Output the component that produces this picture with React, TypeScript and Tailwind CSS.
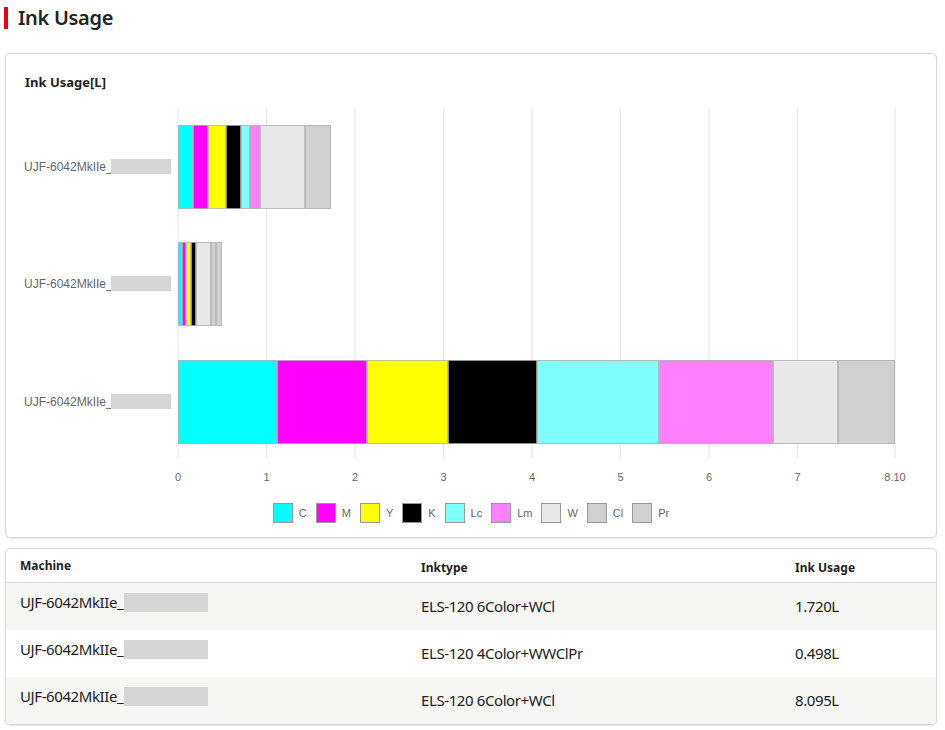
const X0 = 178
const PX = 88.5

type Seg = [string, number, number]
const bars: { y: number; segs: Seg[] }[] = [
  { y: 125, segs: [["#00ffff", 178, 193], ["#ff00ff", 193, 208], ["#ffff00", 208, 226], ["#000000", 226, 241], ["#80ffff", 241, 250], ["#ff80ff", 250, 260], ["#e8e8e8", 260, 305], ["#d0d0d0", 305, 331]] },
  { y: 242, segs: [["#00ffff", 178, 182], ["#ff00ff", 182, 186], ["#ffff00", 186, 191], ["#000000", 191, 196], ["#e8e8e8", 196, 211], ["#d0d0d0", 211, 216], ["#d0d0d0", 216, 222]] },
  { y: 360, segs: [["#00ffff", 178, 277], ["#ff00ff", 277, 367], ["#ffff00", 367, 448], ["#000000", 448, 537], ["#80ffff", 537, 659], ["#ff80ff", 659, 773], ["#e8e8e8", 773, 838], ["#d0d0d0", 838, 895]] },
]

const legend: [string, string][] = [
  ["#00ffff", "C"], ["#ff00ff", "M"], ["#ffff00", "Y"], ["#000000", "K"], ["#80ffff", "Lc"],
  ["#ff80ff", "Lm"], ["#e8e8e8", "W"], ["#d0d0d0", "Cl"], ["#d0d0d0", "Pr"],
]

const rows = [
  ["ELS-120 6Color+WCl", "1.720L"],
  ["ELS-120 4Color+WWClPr", "0.498L"],
  ["ELS-120 6Color+WCl", "8.095L"],
]

function Chart() {
  const ticks = [0, 1, 2, 3, 4, 5, 6, 7]
  return (
    <svg width="932" height="400" viewBox="5 100 932 400" className="block">
      {ticks.map((t) => (
        <line key={t} x1={X0 + t * PX} x2={X0 + t * PX} y1={108} y2={458} stroke="#e4e4e4" />
      ))}
      <line x1={895} x2={895} y1={108} y2={458} stroke="#e4e4e4" />
      {bars.map((b, i) => (
        <g key={i}>
          {b.segs.map(([c, a, z], j) => (
            <rect key={j} x={a + 0.5} y={b.y + 0.5} width={z - a - 1} height={83} fill={c} stroke="#999" strokeOpacity={0.6} />
          ))}
          <text x={24} y={b.y + 46} fontSize="12" fill="#666" fontFamily="Liberation Sans, sans-serif">UJF-6042MkIIe_</text>
          <rect x={111} y={b.y + 34} width={60} height={15} fill="#d6d6d6" />
        </g>
      ))}
      {ticks.map((t) => (
        <text key={t} x={X0 + t * PX} y={481} fontSize="11" fill="#666" textAnchor="middle" fontFamily="Liberation Sans, sans-serif">{t}</text>
      ))}
      <text x={895} y={481} fontSize="11" fill="#666" textAnchor="middle" fontFamily="Liberation Sans, sans-serif">8.10</text>
    </svg>
  )
}

export default function App() {
  return (
    <div className="w-[945px] h-[730px] bg-white text-[#222]" style={{ fontFamily: '"Noto Sans", sans-serif' }}>
      <div className="flex items-center h-[36px] pl-[4px]">
        <div className="w-[4px] h-[22px] bg-[#e60012]" />
        <h1 className="ml-[10px] text-[20px] font-semibold tracking-[-0.3px]">Ink Usage</h1>
      </div>
      <div className="mx-[5px] mt-[17px] w-[932px] h-[485px] border border-[#d6d6d6] rounded-[5px] shadow-[0_1px_2px_rgba(0,0,0,0.1)] relative overflow-hidden">
        <div className="pl-[19px] pt-[19px] text-[13px] font-bold h-[46px]">Ink Usage[L]</div>
        <div className="absolute left-[-1px] top-[46px]"><Chart /></div>
        <div className="absolute left-0 right-0 top-[449px] flex justify-center gap-[9px] text-[11px] text-[#666]" style={{ fontFamily: '"Liberation Sans", sans-serif' }}>
          {legend.map(([c, l]) => (
            <div key={l} className="flex items-center gap-[6px]">
              <span className="w-[20px] h-[20px] border border-[#999]" style={{ background: c }} />
              <span>{l}</span>
            </div>
          ))}
        </div>
      </div>
      <div className="mx-[5px] mt-[10px] w-[932px] border border-[#d6d6d6] rounded-[5px] overflow-hidden shadow-[0_1px_2px_rgba(0,0,0,0.1)]">
        <div className="grid grid-cols-[401px_374px_1fr] h-[34px] items-center border-b border-[#ddd] text-[12px] font-bold pl-[14px]">
          <span>Machine</span><span className="mt-[4px]">Inktype</span><span className="mt-[4px]">Ink Usage</span>
        </div>
        {rows.map(([t, u], i) => (
          <div key={i} className={`grid grid-cols-[401px_374px_1fr] h-[47px] items-center pl-[14px] text-[15px] tracking-[-0.4px] ${i % 2 === 0 ? "bg-[#f6f6f5]" : "bg-white"}`}>
            <span className="flex items-center -mt-[8px]">UJF-6042MkIIe_<span className="inline-block w-[84px] h-[19px] bg-[#d6d6d6] ml-[1px]" /></span>
            <span>{t}</span>
            <span>{u}</span>
          </div>
        ))}
      </div>
    </div>
  )
}
